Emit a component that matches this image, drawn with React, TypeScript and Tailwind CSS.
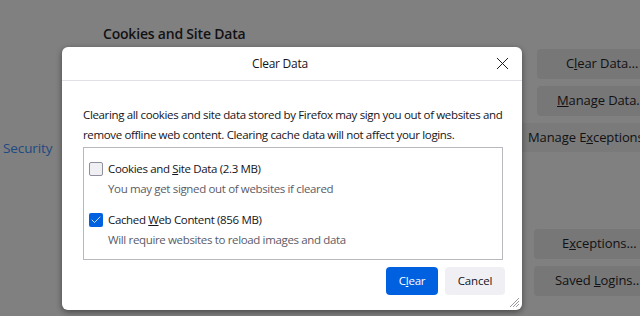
import { X, Check } from "lucide-react";

const FONT = "font-['Segoe_UI','Open_Sans','Noto_Sans',sans-serif]";

// Background settings page (dimmed by the modal overlay)
function BgButton({ children, className = "" }: { children: React.ReactNode; className?: string }) {
  return (
    <div className={`h-[30px] w-[126px] shrink-0 rounded-[4px] bg-[#777777] flex items-center text-[13px] tracking-[-0.1px] text-[#111113] whitespace-nowrap ${className}`}>
      <span>{children}</span>
    </div>
  );
}

function Checkbox({ checked }: { checked: boolean }) {
  return checked ? (
    <div className="w-[14px] h-[14px] rounded-[2px] bg-[#0061e0] flex items-center justify-center shrink-0">
      <Check size={12} strokeWidth={1.6} className="text-white" />
    </div>
  ) : (
    <div className="w-[14px] h-[14px] rounded-[2px] border border-[#8f8f9d] bg-[#f0f0f4] shrink-0" />
  );
}

function Option({
  checked,
  label,
  sub,
}: {
  checked: boolean;
  label: React.ReactNode;
  sub: string;
}) {
  return (
    <div className="flex flex-col">
      <div className="flex items-center gap-[5px] h-[20px]">
        <Checkbox checked={checked} />
        <span className="text-[11.5px] tracking-[-0.35px] text-[#15141a] whitespace-nowrap">{label}</span>
      </div>
      <div className="pl-[19px] h-[19px] flex items-center text-[11.5px] tracking-[-0.35px] text-[#5b5b66] whitespace-nowrap">
        <span>{sub}</span>
      </div>
    </div>
  );
}

export default function App() {
  return (
    <div className={`relative w-[640px] h-[316px] overflow-hidden bg-[#808080] ${FONT}`}>
      {/* page behind the overlay */}
      <div className="flex h-full">
        <div className="w-[100px] shrink-0 pt-[135px] pl-[3px]">
          <span className="text-[13.5px] tracking-[-0.1px] text-[#1d4a82]">Security</span>
        </div>
        <div className="flex-1 pt-[23px]">
          <div className="pl-[3px] text-[14px] font-semibold tracking-[-0.2px] text-[#121214]">Cookies and Site Data</div>
        </div>
        <div className="w-[103px] shrink-0 pt-[49px] flex flex-col gap-[7px]">
          <BgButton className="pl-[29px]">
            C<u>l</u>ear Data…
          </BgButton>
          <BgButton className="pl-[20px]">
            <u>M</u>anage Data…
          </BgButton>
          <div className="h-[29px] -ml-[15px] w-[130px] bg-[#7a7a7a] flex items-center pl-[6px] text-[13px] tracking-[-0.1px] text-[#111113] whitespace-nowrap">
            <span>
              Manage E<u>x</u>ceptions
            </span>
          </div>
          <div className="h-[63px]" />
          <BgButton className="-ml-[3px] pl-[28px]">
            E<u>x</u>ceptions…
          </BgButton>
          <BgButton className="-ml-[3px] pl-[21px]">
            Saved <u>L</u>ogins…
          </BgButton>
        </div>
      </div>

      {/* dialog */}
      <div className="absolute left-[62px] top-[47px] w-[460px] h-[263px] bg-white rounded-[6px] shadow-[0_2px_6px_rgba(0,0,0,0.45)] flex flex-col">
        <div className="h-[34px] border-b border-[#e0e0e6] flex items-center shrink-0">
          <div className="flex-1 text-center text-[12px] tracking-[-0.25px] text-[#15141a] pl-[8px]">Clear Data</div>
          <div className="w-[24px] h-[24px] mr-[8px] flex items-center justify-center text-[#15141a]">
            <X size={21} strokeWidth={1.1} />
          </div>
        </div>

        <div className="flex-1 flex flex-col px-[21px] pt-[24px]">
          <p className="text-[11.5px] leading-[20px] tracking-[-0.35px] text-[#15141a] whitespace-nowrap">
            Clearing all cookies and site data stored by Firefox may sign you out of websites and
            <br />
            remove offline web content. Clearing cache data will not affect your logins.
          </p>
          <div className="mt-[2px] mr-[-2px] h-[113px] border border-[#b8b8bf] flex flex-col gap-[12px] pl-[5px] pt-[11px]">
            <Option
              checked={false}
              label={
                <>
                  Cookies and <u>S</u>ite Data (2.3 MB)
                </>
              }
              sub="You may get signed out of websites if cleared"
            />
            <Option
              checked={true}
              label={
                <>
                  Cached <u>W</u>eb Content (856 MB)
                </>
              }
              sub="Will require websites to reload images and data"
            />
          </div>
          <div className="flex justify-end gap-[7px] mt-[7px] mr-[-4px]">
            <button className="h-[28px] w-[52px] rounded-[4px] bg-[#0061e0] text-white text-[11.5px] tracking-[-0.2px]">
              C<u>l</u>ear
            </button>
            <button className="h-[28px] w-[60px] rounded-[4px] bg-[#f0f0f4] text-[#15141a] text-[11.5px] tracking-[-0.2px]">
              Cancel
            </button>
          </div>
        </div>

        {/* resize grip */}
        <svg className="absolute right-[2px] bottom-[2px]" width="11" height="11" viewBox="0 0 11 11">
          <path d="M10 1 L1 10 M10 4 L4 10 M10 7 L7 10" stroke="#9a9aa0" strokeWidth="1" />
        </svg>
      </div>
    </div>
  );
}
